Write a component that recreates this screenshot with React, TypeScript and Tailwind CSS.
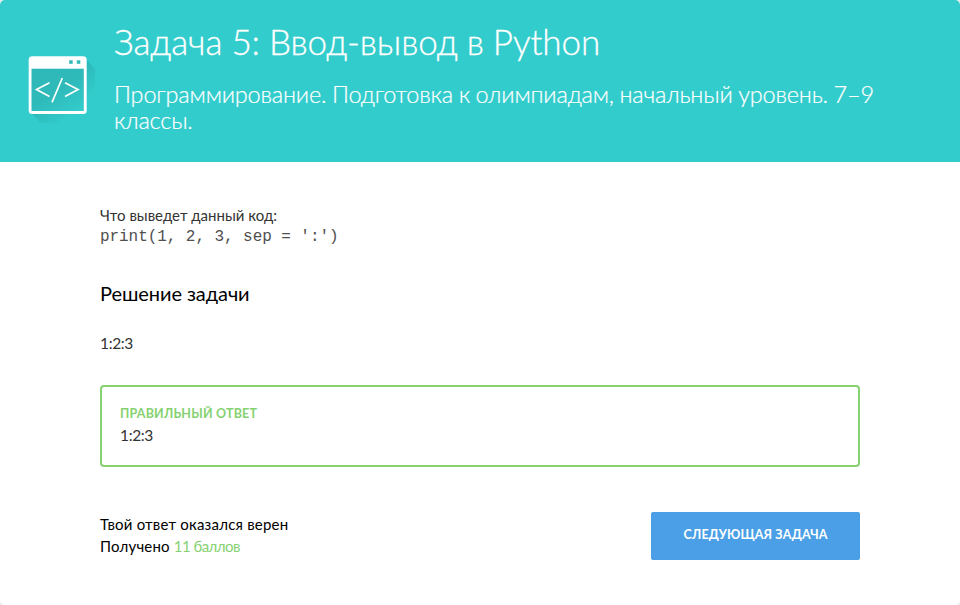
function CodeWindowIcon() {
  return (
    <svg className="block h-20 w-20 shrink-0" viewBox="0 0 80 80" fill="none">
      <defs>
        <linearGradient id="cast" x1="34" y1="34" x2="60" y2="62" gradientUnits="userSpaceOnUse">
          <stop offset="0" stopColor="#2bb1b1" />
          <stop offset="1" stopColor="#33cccc" />
        </linearGradient>
        <linearGradient id="screen" x1="26" y1="26" x2="52" y2="70" gradientUnits="userSpaceOnUse">
          <stop offset="0" stopColor="#2fb8b8" />
          <stop offset="0.45" stopColor="#2fbaba" />
          <stop offset="1" stopColor="#33cccc" />
        </linearGradient>
      </defs>
      <path d="M66 14L75 24V50L50 78H21L11 68Z" fill="url(#cast)" />
      <rect x="8.7" y="11.2" width="58" height="57.8" rx="3.5" fill="#fff" />
      <rect x="11.5" y="23.7" width="52.3" height="42.3" fill="url(#screen)" />
      <rect x="49.2" y="15.3" width="3.5" height="3.5" fill="#2fbaba" />
      <rect x="56.8" y="15.3" width="3.5" height="3.5" fill="#2fbaba" />
      <path d="M29.5 37.8L16.5 44.5L29.5 51.5M45 37.8L58 44.5L45 51.5M42.3 33L32 57.3" stroke="#fff" strokeWidth="1.7" />
    </svg>
  );
}

export default function App() {
  return (
    <div className="h-[605px] w-[960px] bg-[#ececec] font-['Lato','Open_Sans',sans-serif]">
      <main className="h-full overflow-hidden rounded-[5px] bg-white">
        <header className="flex h-[162px] bg-[#33cccc] pl-5 text-white">
          <div className="pt-[45px]">
            <CodeWindowIcon />
          </div>
          <div className="ml-3.5 pt-[21px]">
            <h1 className="whitespace-nowrap text-[35px] leading-10 font-light tracking-[-0.08px] [word-spacing:-0.4px] [-webkit-text-stroke:0.3px_white]">Задача 5: Ввод-вывод в Python</h1>
            <p className="mt-5 whitespace-nowrap text-[23.5px] leading-[26.4px] font-light tracking-[-0.19px] [word-spacing:-0.5px] [-webkit-text-stroke:0.2px_white]">
              Программирование. Подготовка к олимпиадам, начальный уровень. 7–9
              <br />
              классы.
            </p>
          </div>
        </header>
        <section className="px-[100px] pt-[42px]">
          <p className="text-[15px] leading-[22px] text-[#333]">Что выведет данный код:</p>
          <code className="block pt-px font-['Liberation_Mono',monospace] text-[16px] leading-5 tracking-[-0.06px] text-[#505050]">print(1, 2, 3, sep = ':')</code>
          <h2 className="mt-[34px] text-[20px] leading-6 tracking-[-0.07px] text-black">Решение задачи</h2>
          <p className="mt-[27px] text-[15.5px] leading-[22px] tracking-[-0.35px] text-[#333]">1:2:3</p>
          <div className="mt-[31px] h-[82px] rounded-[4px] border-2 border-[#86d272] px-[18px] pt-[17px]">
            <h3 className="text-[12.5px] leading-5 font-bold tracking-[0.2px] text-[#86d272]">ПРАВИЛЬНЫЙ ОТВЕТ</h3>
            <p className="text-[15.5px] leading-[22px] tracking-[-0.35px] text-[#333]">1:2:3</p>
          </div>
          <footer className="mt-[45px] flex justify-between">
            <div className="pt-px text-[15px] leading-[22px] tracking-[0.2px] text-black">
              <p>Твой ответ оказался верен</p>
              <p>
                Получено <span className="tracking-[-0.55px] text-[#86d272]">11 баллов</span>
              </p>
            </div>
            <button className="h-12 w-[209px] rounded-[2px] bg-[#4a9fe7] pb-px text-[12.5px] font-bold tracking-[0.14px] text-white">СЛЕДУЮЩАЯ ЗАДАЧА</button>
          </footer>
        </section>
      </main>
    </div>
  );
}
